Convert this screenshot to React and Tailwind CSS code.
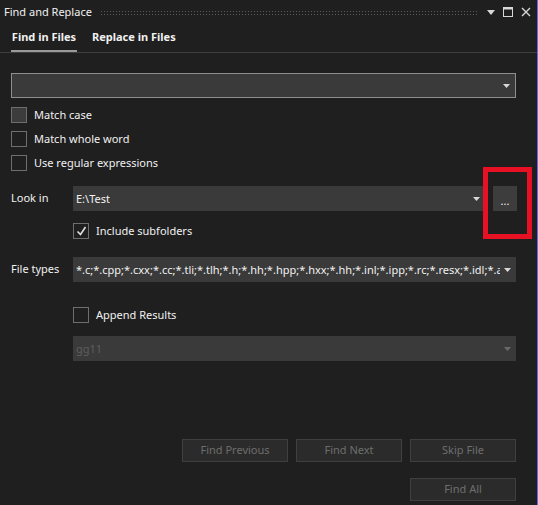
import React from "react";

const font = { fontFamily: '"Noto Sans", "Open Sans", sans-serif' };

function Arrow({ dim = false }) {
  return (
    <svg width="7" height="4" viewBox="0 0 7 4" className="shrink-0">
      <path d="M0 0h7L3.5 4z" fill={dim ? "#6a6a6a" : "#d8d8d8"} />
    </svg>
  );
}

function Combo({ value = "", dim = false, className = "", bordered = false }) {
  return (
    <div
      className={`flex h-[25px] min-w-0 shrink-0 items-center justify-between gap-[4px] bg-[#3a3a3a] pl-[3px] pr-[5px] ${
        bordered ? "border border-[#8e8e8e]" : ""
      } ${className}`}
    >
      <span
        className={`min-w-0 overflow-hidden whitespace-nowrap text-[11px] leading-[14px] ${
          dim ? "text-[#5e5e5e]" : "text-[#f1f1f1]"
        }`}
      >
        {value}
      </span>
      <Arrow dim={dim} />
    </div>
  );
}

function Check({ label, checked = false, filled = false, className = "" }) {
  return (
    <div className={`flex h-[16px] shrink-0 items-center gap-[7px] ${className}`}>
      <div
        className={`flex h-[16px] w-[16px] shrink-0 items-center justify-center border border-[#6e6e6e] ${
          filled ? "bg-[#3c3c3c]" : ""
        }`}
      >
        {checked && (
          <svg width="11" height="10" viewBox="0 0 11 10">
            <path d="M1.5 5.5l3 3 5-7.5" stroke="#e0e0e0" strokeWidth="1.6" fill="none" />
          </svg>
        )}
      </div>
      <span className="whitespace-nowrap text-[11px] leading-[14px] text-[#f1f1f1]">{label}</span>
    </div>
  );
}

function Btn({ children }) {
  return (
    <div className="flex h-[23px] w-[106px] shrink-0 items-center justify-center border border-[#3f3f3f] bg-[#2b2b2b] text-[11px] text-[#6e6e6e]">
      {children}
    </div>
  );
}

export default function App() {
  return (
    <div
      style={font}
      className="relative flex h-[505px] w-[538px] flex-col overflow-hidden border-r border-[#7160e8] bg-[#1f1f1f]"
    >
      {/* title bar */}
      <div className="flex h-[22px] shrink-0 items-center pl-[4px] pr-[6px] pt-[2px]">
        <span className="whitespace-nowrap text-[11px] leading-[14px] text-[#f1f1f1]">Find and Replace</span>
        <div className="ml-[8px] mr-[8px] h-[5px] flex-1 bg-[radial-gradient(#5a5a5a_0.8px,transparent_0.8px)] bg-[length:3px_3px]" />
        <div className="flex items-center gap-[8px]">
          <svg width="8" height="5" viewBox="0 0 8 5">
            <path d="M0 0h8L4 5z" fill="#d8d8d8" />
          </svg>
          <svg width="10" height="10" viewBox="0 0 10 10">
            <rect x="0.5" y="0.5" width="9" height="9" fill="none" stroke="#d8d8d8" />
            <rect x="0.5" y="0.5" width="9" height="2" fill="#d8d8d8" />
          </svg>
          <svg width="10" height="10" viewBox="0 0 10 10">
            <path d="M1 1l8 8M9 1l-8 8" stroke="#d8d8d8" strokeWidth="1.4" />
          </svg>
        </div>
      </div>

      {/* tabs */}
      <div className="flex h-[31px] shrink-0 gap-[15px] border-b border-[#3f3f3f] pl-[11px]">
        <div className="flex h-full flex-col items-center">
          <span className="mt-[8px] whitespace-nowrap text-[11px] font-bold leading-[14px] text-[#f1f1f1]">
            Find in Files
          </span>
          <div className="mt-auto h-[2px] w-[66px] bg-[#9a9a9a]" />
        </div>
        <div className="flex h-full flex-col">
          <span className="mt-[8px] whitespace-nowrap text-[11px] font-bold leading-[14px] text-[#f1f1f1]">
            Replace in Files
          </span>
        </div>
      </div>

      <div className="flex flex-col pl-[11px] pr-[21px]">
        <Combo bordered className="mt-[20px]" />

        <div className="mt-[9px] flex flex-col gap-[8px]">
          <Check label="Match case" filled />
          <Check label="Match whole word" />
          <Check label="Use regular expressions" />
        </div>

        <div className="mt-[15px] flex shrink-0 items-center">
          <span className="w-[62px] shrink-0 whitespace-nowrap text-[11px] text-[#f1f1f1]">Look in</span>
          <Combo value="E:\Test" className="w-[412px]" />
          <div className="ml-[8px] flex h-[25px] w-[24px] shrink-0 items-center justify-center bg-[#3d3d3d] pt-[3px] text-[11px] leading-none text-[#f1f1f1]">
            ...
          </div>
        </div>

        <Check label="Include subfolders" checked className="ml-[62px] mt-[12px]" />

        <div className="mt-[18px] flex shrink-0 items-center">
          <span className="w-[62px] shrink-0 whitespace-nowrap text-[11px] text-[#f1f1f1]">File types</span>
          <Combo
            value="*.c;*.cpp;*.cxx;*.cc;*.tli;*.tlh;*.h;*.hh;*.hpp;*.hxx;*.hh;*.inl;*.ipp;*.rc;*.resx;*.idl;*.asm;*.inc"
            className="flex-1"
          />
        </div>

        <Check label="Append Results" className="ml-[62px] mt-[25px]" />

        <Combo value="gg11" dim className="ml-[62px] mt-[13px]" />

        <div className="ml-[171px] mt-[78px] flex gap-[8px]">
          <Btn>Find Previous</Btn>
          <Btn>Find Next</Btn>
          <Btn>Skip File</Btn>
        </div>
        <div className="mt-[16px] flex justify-end">
          <Btn>Find All</Btn>
        </div>
      </div>

      {/* red annotation */}
      <div className="absolute left-[483px] top-[167px] h-[72px] w-[49px] border-[5px] border-[#e81123]" />
    </div>
  );
}
